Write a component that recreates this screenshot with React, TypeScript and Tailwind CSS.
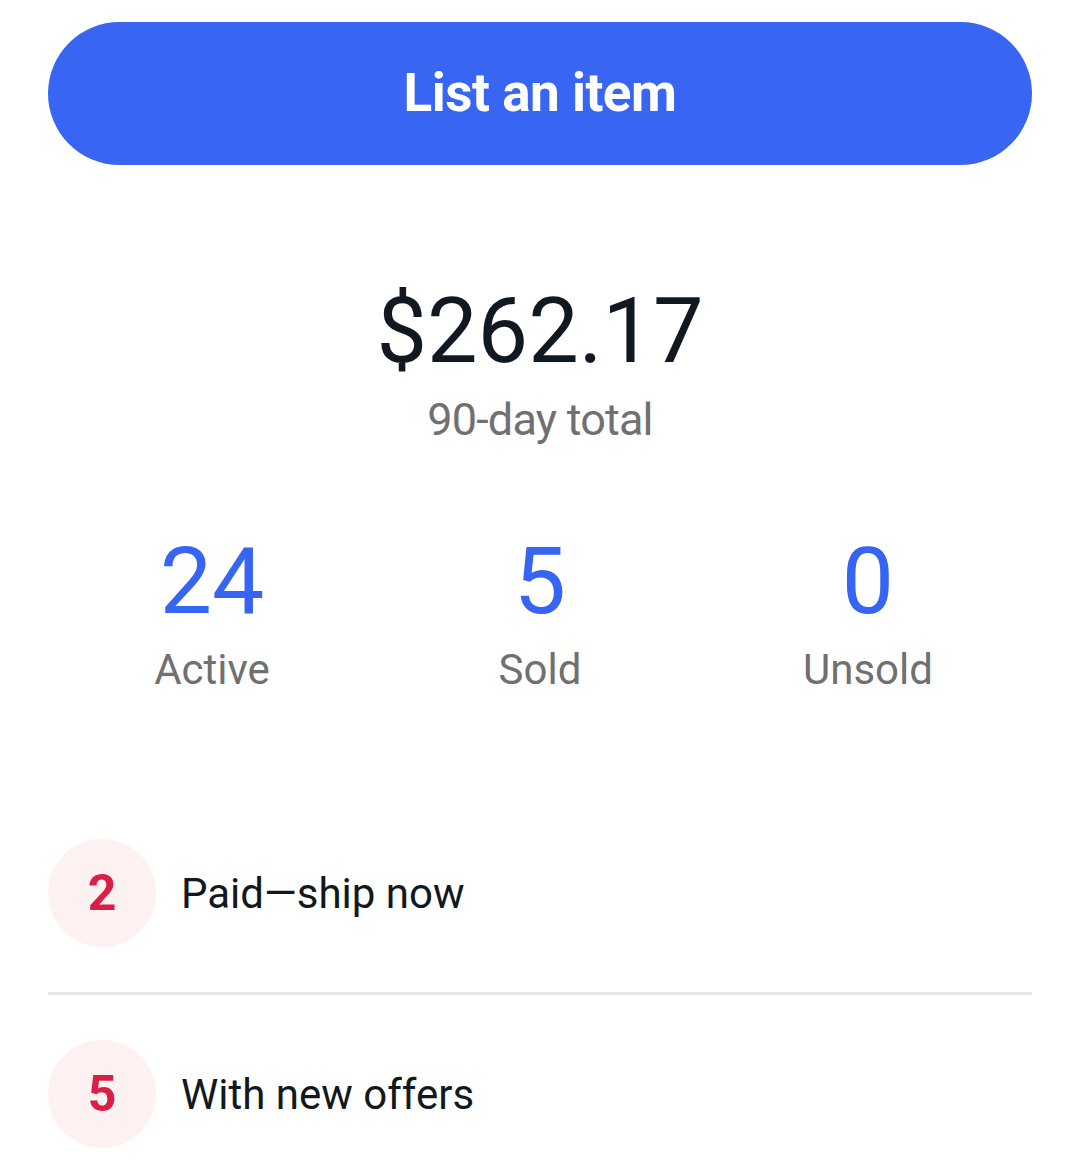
import React from "react";

const stats = [
  { value: "24", label: "Active" },
  { value: "5", label: "Sold" },
  { value: "0", label: "Unsold" },
];

const tasks = [
  { count: "2", label: "Paid\u2014ship now" },
  { count: "5", label: "With new offers" },
];

export default function App() {
  return (
    <div className="min-h-screen bg-white px-12 pt-[22px] font-['Roboto',_'Liberation_Sans',_sans-serif]">
      {/* Primary action */}
      <button className="flex h-[143px] w-full items-center justify-center rounded-full bg-[#3866f2] text-[53px] font-bold tracking-[-0.5px] text-white">
        List an item
      </button>

      {/* Totals */}
      <div className="mt-[115px] flex flex-col items-center">
        <div className="text-[90px] leading-[104px] text-[#111820]">$262.17</div>
        <div className="mt-[10px] text-[45px] leading-[52px] tracking-[-0.8px] text-[#707070]">90-day total</div>
      </div>

      {/* Stats */}
      <div className="mt-[86px] grid grid-cols-3">
        {stats.map((s) => (
          <div key={s.label} className="flex flex-col items-center">
            <div className="text-[93px] leading-[100px] text-[#3665f3]">{s.value}</div>
            <div className="mt-[13px] text-[42px] leading-[50px] text-[#707070]">{s.label}</div>
          </div>
        ))}
      </div>

      {/* Tasks */}
      <div className="mt-[99px]">
        {tasks.map((t, i) => (
          <div
            key={t.label}
            className={`flex items-center gap-[25px] py-[45px] ${i === 0 ? "border-b-[3px] border-[#e5e5e5]" : ""}`}
          >
            <div className="flex h-[108px] w-[108px] items-center justify-center rounded-full bg-[#fdf1f2] text-[50px] font-bold text-[#d81f45]">
              {t.count}
            </div>
            <div className="text-[42px] leading-[63px] text-[#111820]">{t.label}</div>
          </div>
        ))}
      </div>
    </div>
  );
}
